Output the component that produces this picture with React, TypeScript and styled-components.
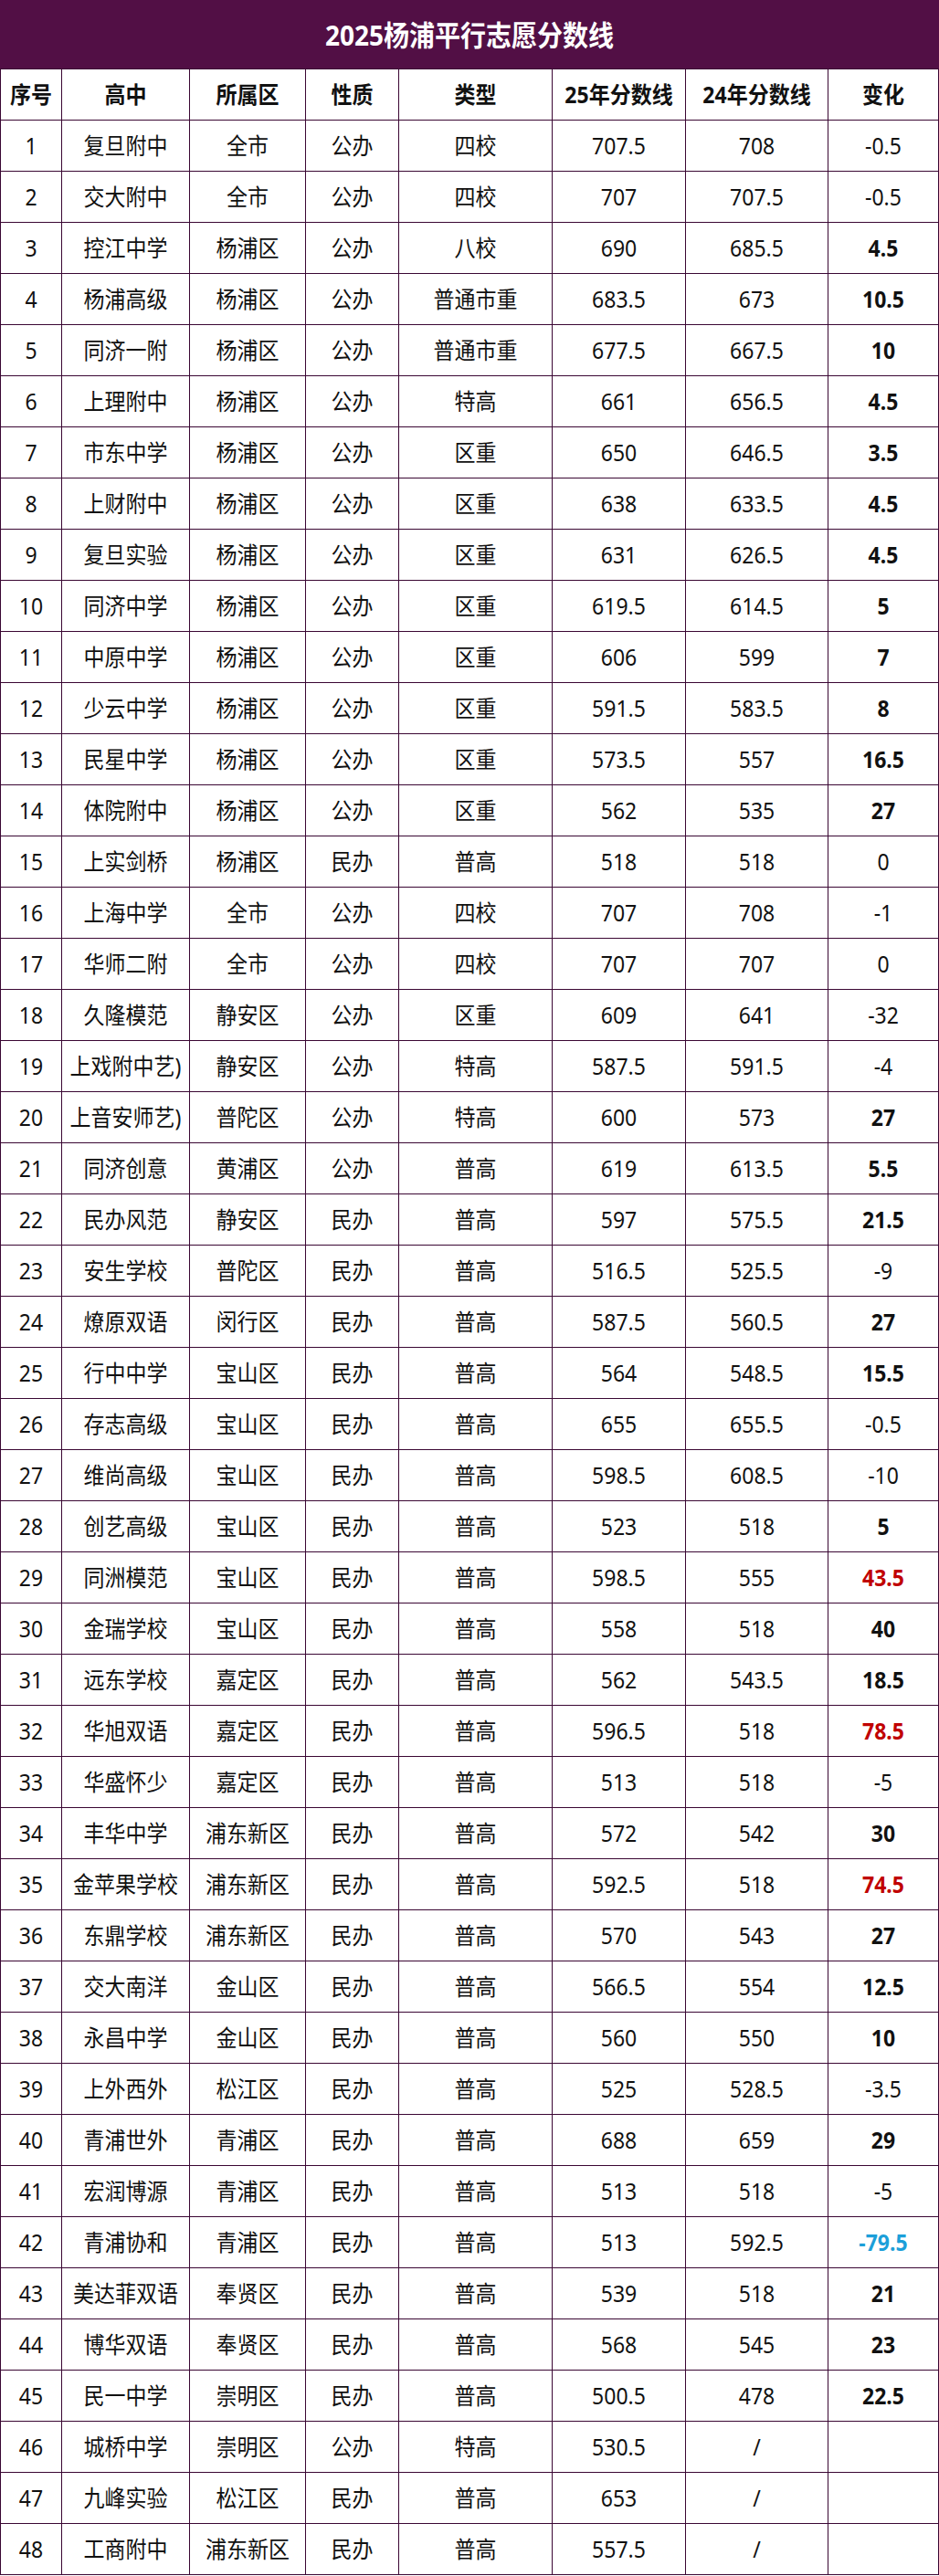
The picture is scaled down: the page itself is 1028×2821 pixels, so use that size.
import React from "react";
import styled, { createGlobalStyle } from "styled-components";

const GlobalStyle = createGlobalStyle`
  html, body {
    margin: 0;
    padding: 0;
    background: #ffffff;
  }
  body {
    font-family: "Noto Sans", "Noto Sans CJK SC", sans-serif;
    color: #111;
  }
`;

const LINE = "#3a0733";
const COLS = "67px 140px 127px 102px 168px 146px 156px 121px";

type Tone = "plain" | "bold" | "red" | "blue";

type School = {
  no: number;
  name: string;
  area: string;
  kind: string;
  type: string;
  s25: string;
  s24: string;
  diff: string;
  tone: Tone;
};

const raw: [string, string, string, string, string, string, string, Tone][] = [
  ["复旦附中", "全市", "公办", "四校", "707.5", "708", "-0.5", "plain"],
  ["交大附中", "全市", "公办", "四校", "707", "707.5", "-0.5", "plain"],
  ["控江中学", "杨浦区", "公办", "八校", "690", "685.5", "4.5", "bold"],
  ["杨浦高级", "杨浦区", "公办", "普通市重", "683.5", "673", "10.5", "bold"],
  ["同济一附", "杨浦区", "公办", "普通市重", "677.5", "667.5", "10", "bold"],
  ["上理附中", "杨浦区", "公办", "特高", "661", "656.5", "4.5", "bold"],
  ["市东中学", "杨浦区", "公办", "区重", "650", "646.5", "3.5", "bold"],
  ["上财附中", "杨浦区", "公办", "区重", "638", "633.5", "4.5", "bold"],
  ["复旦实验", "杨浦区", "公办", "区重", "631", "626.5", "4.5", "bold"],
  ["同济中学", "杨浦区", "公办", "区重", "619.5", "614.5", "5", "bold"],
  ["中原中学", "杨浦区", "公办", "区重", "606", "599", "7", "bold"],
  ["少云中学", "杨浦区", "公办", "区重", "591.5", "583.5", "8", "bold"],
  ["民星中学", "杨浦区", "公办", "区重", "573.5", "557", "16.5", "bold"],
  ["体院附中", "杨浦区", "公办", "区重", "562", "535", "27", "bold"],
  ["上实剑桥", "杨浦区", "民办", "普高", "518", "518", "0", "plain"],
  ["上海中学", "全市", "公办", "四校", "707", "708", "-1", "plain"],
  ["华师二附", "全市", "公办", "四校", "707", "707", "0", "plain"],
  ["久隆模范", "静安区", "公办", "区重", "609", "641", "-32", "plain"],
  ["上戏附中艺)", "静安区", "公办", "特高", "587.5", "591.5", "-4", "plain"],
  ["上音安师艺)", "普陀区", "公办", "特高", "600", "573", "27", "bold"],
  ["同济创意", "黄浦区", "公办", "普高", "619", "613.5", "5.5", "bold"],
  ["民办风范", "静安区", "民办", "普高", "597", "575.5", "21.5", "bold"],
  ["安生学校", "普陀区", "民办", "普高", "516.5", "525.5", "-9", "plain"],
  ["燎原双语", "闵行区", "民办", "普高", "587.5", "560.5", "27", "bold"],
  ["行中中学", "宝山区", "民办", "普高", "564", "548.5", "15.5", "bold"],
  ["存志高级", "宝山区", "民办", "普高", "655", "655.5", "-0.5", "plain"],
  ["维尚高级", "宝山区", "民办", "普高", "598.5", "608.5", "-10", "plain"],
  ["创艺高级", "宝山区", "民办", "普高", "523", "518", "5", "bold"],
  ["同洲模范", "宝山区", "民办", "普高", "598.5", "555", "43.5", "red"],
  ["金瑞学校", "宝山区", "民办", "普高", "558", "518", "40", "bold"],
  ["远东学校", "嘉定区", "民办", "普高", "562", "543.5", "18.5", "bold"],
  ["华旭双语", "嘉定区", "民办", "普高", "596.5", "518", "78.5", "red"],
  ["华盛怀少", "嘉定区", "民办", "普高", "513", "518", "-5", "plain"],
  ["丰华中学", "浦东新区", "民办", "普高", "572", "542", "30", "bold"],
  ["金苹果学校", "浦东新区", "民办", "普高", "592.5", "518", "74.5", "red"],
  ["东鼎学校", "浦东新区", "民办", "普高", "570", "543", "27", "bold"],
  ["交大南洋", "金山区", "民办", "普高", "566.5", "554", "12.5", "bold"],
  ["永昌中学", "金山区", "民办", "普高", "560", "550", "10", "bold"],
  ["上外西外", "松江区", "民办", "普高", "525", "528.5", "-3.5", "plain"],
  ["青浦世外", "青浦区", "民办", "普高", "688", "659", "29", "bold"],
  ["宏润博源", "青浦区", "民办", "普高", "513", "518", "-5", "plain"],
  ["青浦协和", "青浦区", "民办", "普高", "513", "592.5", "-79.5", "blue"],
  ["美达菲双语", "奉贤区", "民办", "普高", "539", "518", "21", "bold"],
  ["博华双语", "奉贤区", "民办", "普高", "568", "545", "23", "bold"],
  ["民一中学", "崇明区", "民办", "普高", "500.5", "478", "22.5", "bold"],
  ["城桥中学", "崇明区", "公办", "特高", "530.5", "/", "", "plain"],
  ["九峰实验", "松江区", "民办", "普高", "653", "/", "", "plain"],
  ["工商附中", "浦东新区", "民办", "普高", "557.5", "/", "", "plain"],
];

const schools: School[] = raw.map((r, i) => ({
  no: i + 1,
  name: r[0],
  area: r[1],
  kind: r[2],
  type: r[3],
  s25: r[4],
  s24: r[5],
  diff: r[6],
  tone: r[7],
}));

const headers = ["序号", "高中", "所属区", "性质", "类型", "25年分数线", "24年分数线", "变化"];

const Sheet = styled.div`
  width: 1028px;
  display: flex;
  flex-direction: column;
`;

const TitleBar = styled.div`
  height: 76px;
  background: #520f45;
  display: flex;
  align-items: center;
  justify-content: center;
  box-sizing: border-box;
  border-bottom: 1px solid ${LINE};
`;

const Title = styled.h1`
  margin: 0;
  color: #ffffff;
  font-size: 28px;
  font-weight: 700;
  line-height: 1;
  transform: scaleY(1.1);
`;

const Row = styled.div`
  display: grid;
  grid-template-columns: ${COLS};
  height: 56px;
  box-sizing: border-box;
  border-left: 1px solid ${LINE};
  border-bottom: 1px solid ${LINE};
  background: #ffffff;
`;

const toneColor: Record<Tone, string> = {
  plain: "#111111",
  bold: "#111111",
  red: "#c00000",
  blue: "#1c9fd9",
};

const CellBox = styled.div<{ $tone?: Tone; $head?: boolean }>`
  display: flex;
  align-items: center;
  justify-content: center;
  border-right: 1px solid ${LINE};
  white-space: nowrap;
  font-size: 23px;
  font-weight: ${(p) => (p.$head || (p.$tone && p.$tone !== "plain") ? 700 : 400)};
  color: ${(p) => toneColor[p.$tone || "plain"]};
`;

const CellText = styled.span`
  display: inline-block;
  line-height: 1;
  transform: scaleY(1.1);
`;

const Cell: React.FC<{ tone?: Tone; head?: boolean; children?: React.ReactNode }> = ({
  tone,
  head,
  children,
}) => (
  <CellBox $tone={tone} $head={head}>
    <CellText>{children}</CellText>
  </CellBox>
);

const HeaderRow = () => (
  <Row>
    {headers.map((h) => (
      <Cell key={h} head>
        {h}
      </Cell>
    ))}
  </Row>
);

const SchoolRow: React.FC<{ s: School }> = ({ s }) => (
  <Row>
    <Cell>{s.no}</Cell>
    <Cell>{s.name}</Cell>
    <Cell>{s.area}</Cell>
    <Cell>{s.kind}</Cell>
    <Cell>{s.type}</Cell>
    <Cell>{s.s25}</Cell>
    <Cell>{s.s24}</Cell>
    <Cell tone={s.tone}>{s.diff}</Cell>
  </Row>
);

const App = () => {
  return (
    <>
      <GlobalStyle />
      <Sheet>
        <TitleBar>
          <Title>2025杨浦平行志愿分数线</Title>
        </TitleBar>
        <HeaderRow />
        {schools.map((s) => (
          <SchoolRow key={s.no} s={s} />
        ))}
      </Sheet>
    </>
  );
};

export default App;
